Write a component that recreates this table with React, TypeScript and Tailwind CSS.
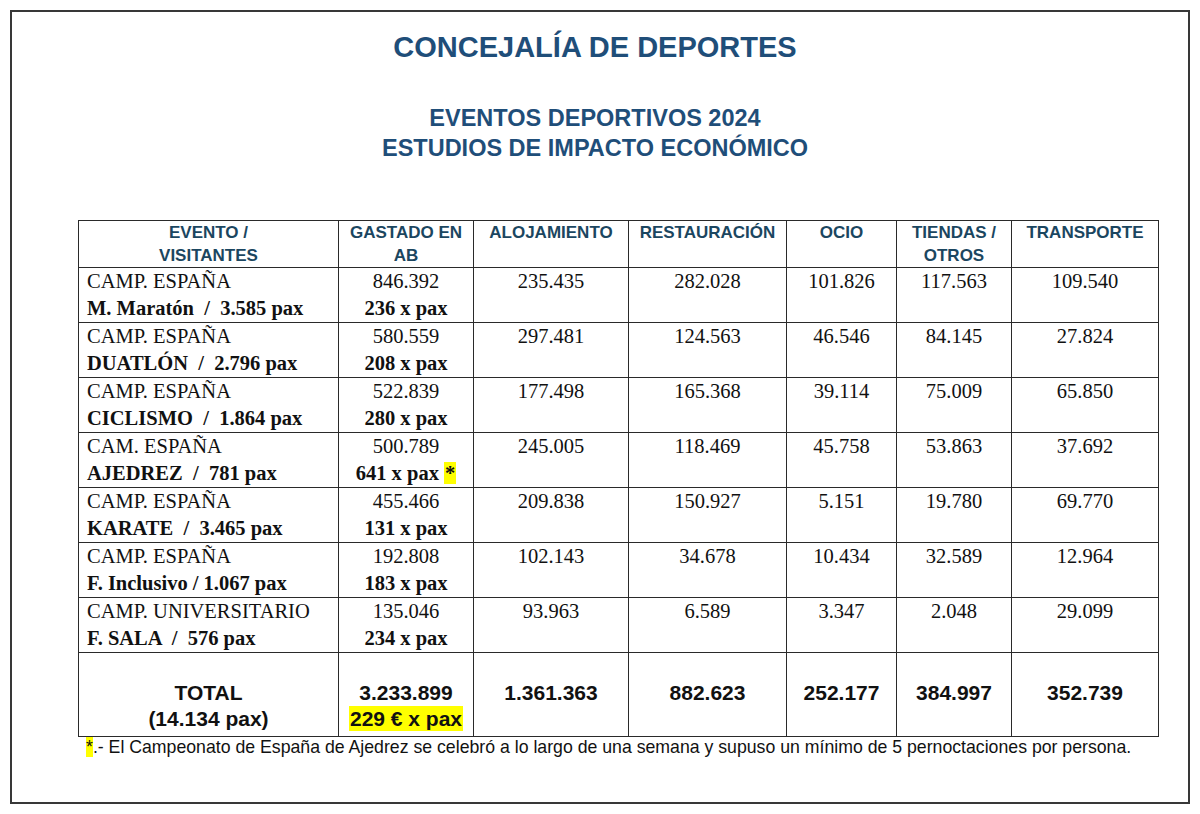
const rows = [
  { l1: "CAMP. ESPAÑA", l2: "M. Maratón  /  3.585 pax", total: "846.392", perPax: "236 x pax", vals: ["235.435", "282.028", "101.826", "117.563", "109.540"] },
  { l1: "CAMP. ESPAÑA", l2: "DUATLÓN  /  2.796 pax", total: "580.559", perPax: "208 x pax", vals: ["297.481", "124.563", "46.546", "84.145", "27.824"] },
  { l1: "CAMP. ESPAÑA", l2: "CICLISMO  /  1.864 pax", total: "522.839", perPax: "280 x pax", vals: ["177.498", "165.368", "39.114", "75.009", "65.850"] },
  { l1: "CAM. ESPAÑA", l2: "AJEDREZ  /  781 pax", total: "500.789", perPax: "641 x pax", star: true, vals: ["245.005", "118.469", "45.758", "53.863", "37.692"] },
  { l1: "CAMP. ESPAÑA", l2: "KARATE  /  3.465 pax", total: "455.466", perPax: "131 x pax", vals: ["209.838", "150.927", "5.151", "19.780", "69.770"] },
  { l1: "CAMP. ESPAÑA", l2: "F. Inclusivo / 1.067 pax", total: "192.808", perPax: "183 x pax", vals: ["102.143", "34.678", "10.434", "32.589", "12.964"] },
  { l1: "CAMP. UNIVERSITARIO", l2: "F. SALA  /  576 pax", total: "135.046", perPax: "234 x pax", vals: ["93.963", "6.589", "3.347", "2.048", "29.099"] },
];

const headers = ["ALOJAMIENTO", "RESTAURACIÓN", "OCIO", "TIENDAS / OTROS", "TRANSPORTE"];
const totals = ["1.361.363", "882.623", "252.177", "384.997", "352.739"];

const cell = "border border-[#2a2a2a] align-top p-0";
const head = "font-['Liberation_Sans',Arial,sans-serif] font-bold text-[17px] leading-[23px] text-[#1b4660] text-center";

export default function App() {
  return (
    <div className="w-[1200px] h-[814px] bg-white p-[10px] font-['Liberation_Serif','Times_New_Roman',serif] text-[#111]">
      <div className="w-[1180px] h-[794px] border-2 border-[#383838] pt-[17px] pr-[10px]">
        <h1 className="text-center font-['Liberation_Sans',Arial,sans-serif] font-bold text-[29px] leading-[36px] text-[#1f4e79]">
          CONCEJALÍA DE DEPORTES
        </h1>
        <div className="mt-[38px] text-center font-['Liberation_Sans',Arial,sans-serif] font-bold text-[23.5px] leading-[30px] text-[#1f4e79]">
          <p>EVENTOS DEPORTIVOS 2024</p>
          <p>ESTUDIOS DE IMPACTO ECONÓMICO</p>
        </div>

        <div className="ml-[66px] mt-[57px] w-[1080px]">
          <table className="table-fixed border-collapse w-[1080px]">
            <colgroup>
              <col className="w-[260px]" />
              <col className="w-[135px]" />
              <col className="w-[155px]" />
              <col className="w-[158px]" />
              <col className="w-[110px]" />
              <col className="w-[115px]" />
              <col className="w-[147px]" />
            </colgroup>
            <thead>
              <tr className="h-[47px]">
                <th className={cell}>
                  <div className={head}>
                    EVENTO /<br />VISITANTES
                  </div>
                </th>
                <th className={cell}>
                  <div className={head}>
                    GASTADO EN<br />AB
                  </div>
                </th>
                {headers.map((h) => (
                  <th key={h} className={cell}>
                    <div className={head}>
                      {h === "TIENDAS / OTROS" ? (
                        <>
                          TIENDAS /<br />OTROS
                        </>
                      ) : (
                        h
                      )}
                    </div>
                  </th>
                ))}
              </tr>
            </thead>
            <tbody className="text-[20.5px] leading-[27px]">
              {rows.map((r, i) => (
                <tr key={i} className="h-[55px]">
                  <td className={cell}>
                    <div className="pl-[8px] whitespace-pre">
                      <div>{r.l1}</div>
                      <div className="font-bold">{r.l2}</div>
                    </div>
                  </td>
                  <td className={cell}>
                    <div className="text-center">
                      <div>{r.total}</div>
                      <div className="font-bold">
                        {r.perPax}
                        {r.star && (
                          <>
                            {" "}
                            <span className="bg-[#ffff00] px-[1px]">*</span>
                          </>
                        )}
                      </div>
                    </div>
                  </td>
                  {r.vals.map((v, j) => (
                    <td key={j} className={cell}>
                      <div className="text-center">{v}</div>
                    </td>
                  ))}
                </tr>
              ))}
              <tr className="h-[84px] font-['Liberation_Sans',Arial,sans-serif] font-bold text-[21px] leading-[26px]">
                <td className={cell}>
                  <div className="pt-[27px] text-center">
                    <div>TOTAL</div>
                    <div>(14.134 pax)</div>
                  </div>
                </td>
                <td className={cell}>
                  <div className="pt-[27px] text-center">
                    <div>3.233.899</div>
                    <div>
                      <span className="bg-[#ffff00] px-[1px] py-[1px]">229 € x pax</span>
                    </div>
                  </div>
                </td>
                {totals.map((t) => (
                  <td key={t} className={cell}>
                    <div className="pt-[27px] text-center">{t}</div>
                  </td>
                ))}
              </tr>
            </tbody>
          </table>
          <p className="pl-[8px] font-['Liberation_Sans',Arial,sans-serif] text-[17.7px] leading-[20px] text-[#111] whitespace-nowrap">
            <span className="bg-[#ffff00]">*</span>.- El Campeonato de España de Ajedrez se celebró a lo largo de una semana y supuso un mínimo de 5 pernoctaciones por persona.
          </p>
        </div>
      </div>
    </div>
  );
}
